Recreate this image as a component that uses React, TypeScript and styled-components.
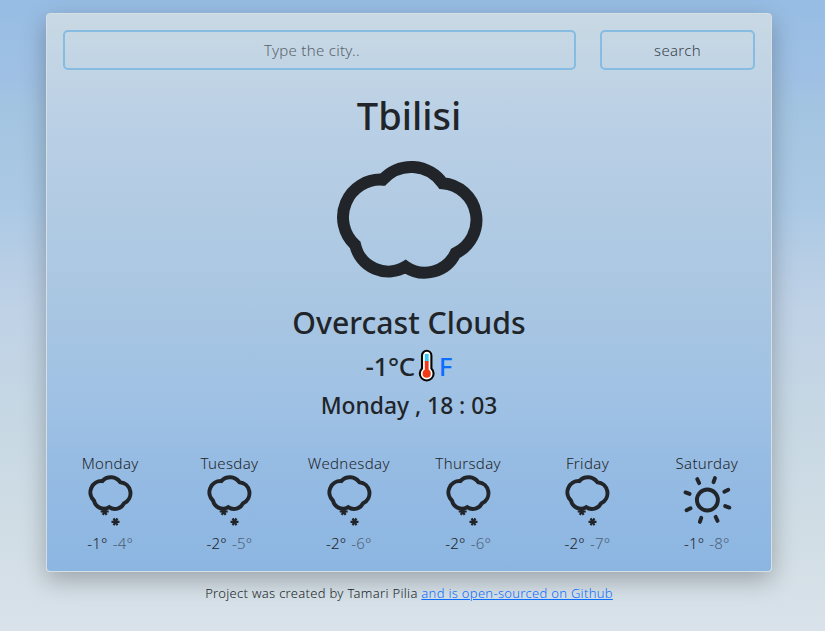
import React from "react";
import styled, { createGlobalStyle } from "styled-components";

const Global = createGlobalStyle`
  * { box-sizing: border-box; }
  html { min-height: 100%; background: linear-gradient(180deg, #97bde4 0%, #9fc0e4 12%, #a3c4e1 17%, #abc9e5 33%, #b5cde5 40%, #bfd2e6 49%, #c7d8e4 67%, #d2dee5 87%, #d9e2ea 100%); }
  body { margin: 0; color: #212529; font-family: "Noto Sans", sans-serif; font-size: 16px; line-height: 1.5; }
`;
const Page = styled.main`
  width: 726px;
  height: 631px;
  margin-left: 46px;
  padding-top: 13px;
`;
const Card = styled.section`
  height: 559px;
  padding: 16px;
  border: 1px solid #d7dfe6;
  border-radius: 4px;
  background: linear-gradient(180deg, #c9d9e4 0%, #b9cfe5 21%, #aac7e2 50%, #9fc1e4 70%, #95bbe3 82%, #8cb6e2 100%);
  box-shadow: 0 8px 24px rgba(0, 0, 0, .27);
  display: flex;
  flex-direction: column;
  align-items: center;
`;
const Search = styled.form`
  width: 100%;
  display: grid;
  grid-template-columns: 513px 155px;
  column-gap: 24px;
  height: 40px;
`;
const field = `
  height: 40px;
  min-width: 0;
  border: 2px solid #86bbe2;
  border-radius: 5px;
  background: transparent;
  font-family: inherit;
  font-weight: 300;
  font-size: 15px;
  letter-spacing: .3px;
  text-align: center;
  padding: 0 12px;
`;
const Input = styled.input`
  ${field}
  padding-right: 27px;
  &::placeholder { color: #59636b; opacity: 1; }
`;
const Button = styled.button`${field} color: #39434a;`;
const City = styled.h1`
  margin: 21px 0 0;
  height: 48px;
  font-size: 38px;
  line-height: 48px;
  font-weight: 500;
`;
const Hero = styled.div`
  display: flex;
  height: 118px;
  margin: 22px 0 23px;
`;
const Condition = styled.h2`
  margin: 0;
  font-size: 30.2px;
  line-height: 42px;
  font-weight: 500;
  white-space: nowrap;
`;
const Temperature = styled.h3`
  display: flex;
  align-items: center;
  margin: 1px 0 0;
  height: 42px;
  font-size: 26px;
  line-height: 42px;
  font-weight: 500;
`;
const Degrees = styled.span`letter-spacing: -.4px;`;
const Unit = styled.a`
  color: #0d6efd;
  text-decoration: none;
`;
const Clock = styled.h4`
  margin: 0;
  height: 38px;
  font-size: 22.8px;
  line-height: 37px;
  font-weight: 500;
  white-space: nowrap;
`;
const Forecast = styled.div`
  width: 716px;
  margin: 27px 1px 0 0;
  display: grid;
  grid-template-columns: repeat(6, 1fr);
`;
const Day = styled.div`
  display: flex;
  flex-direction: column;
  align-items: center;
  font-size: 15px;
  letter-spacing: .35px;
  font-weight: 300;
  line-height: 24px;
`;
const DayIcon = styled.div`
  height: 55px;
  margin-top: 1px;
  display: flex;
`;
const Temps = styled.div`
  display: flex;
  gap: 5px;
  letter-spacing: .2px;
`;
const Low = styled.span`opacity: .6;`;
const Footer = styled.footer`
  text-align: center;
  font-size: 13px;
  letter-spacing: .3px;
  font-weight: 300;
  line-height: 20px;
  margin-top: 11px;
  white-space: nowrap;
  a { color: #0d6efd; }
`;
const Icon = styled.svg`
  display: block;
  overflow: visible;
`;

const cloud = "M46 18.7A38.7 38.7 0 0 1 106.3 22.3A36.8 36.8 0 0 1 119.3 92.3A34.4 34.4 0 0 1 69 105.7A34.2 34.2 0 0 1 18.3 84A37.6 37.6 0 0 1 46 18.7Z";

function Cloud() {
  return (
    <Icon width="145" height="118" viewBox="0 0 146 118" preserveAspectRatio="none" fill="none" stroke="#212529" strokeWidth="12">
      <path d={cloud} />
    </Icon>
  );
}
function Snow() {
  return (
    <Icon width="50" height="55" viewBox="0 0 50 55" fill="none" stroke="#212529">
      <g transform="translate(3.6 -.5) scale(.298 .3)"><path strokeWidth="13.3" d={cloud} /></g>
      <path strokeWidth="2.2" d="M15.7 35.5h8M17.8 32.1l3.8 6.8M21.6 32.1l-3.8 6.8M26.5 45.8h8M28.6 42.4l3.8 6.8M32.4 42.4l-3.8 6.8" />
    </Icon>
  );
}
function Sun() {
  return (
    <Icon width="50" height="55" viewBox="0 0 50 55" fill="none" stroke="#212529" strokeWidth="3.9" strokeLinecap="round">
      <circle cx="25.4" cy="24" r="10.5" />
      {[0, 1, 2, 3, 4, 5, 6, 7].map(i => <path key={i} transform={`rotate(${19 + i * 45} 25.4 24)`} d="M25.4 5.2V.8" />)}
    </Icon>
  );
}
function Thermometer() {
  return (
    <Icon width="24" height="36" viewBox="0 0 24 36">
      <path d="M7 20.5V7.5a4.7 4.7 0 0 1 9.4 0v13a6.9 6.9 0 1 1-9.4 0Z" fill="white" stroke="#050505" strokeWidth="2.1" />
      <path d="M9.8 6h3.8v8H9.8z" fill="#37c7f4" />
      <path d="M9.8 13h3.8v10H9.8z" fill="#f03a17" />
      <circle cx="11.7" cy="25.7" r="4.1" fill="#f03a17" />
    </Icon>
  );
}
const days = [
  ["Monday", "-1°", "-4°"],
  ["Tuesday", "-2°", "-5°"],
  ["Wednesday", "-2°", "-6°"],
  ["Thursday", "-2°", "-6°"],
  ["Friday", "-2°", "-7°"],
  ["Saturday", "-1°", "-8°"],
];

export default function App() {
  return (
    <>
      <Global />
      <Page>
        <Card>
          <Search>
            <Input placeholder="Type the city.." />
            <Button type="button">search</Button>
          </Search>
          <City>Tbilisi</City>
          <Hero><Cloud /></Hero>
          <Condition>Overcast Clouds</Condition>
          <Temperature><Degrees>-1°C</Degrees><Thermometer /><Unit href="#">F</Unit></Temperature>
          <Clock>Monday , 18 : 03</Clock>
          <Forecast>
            {days.map(([name, high, low]) => (
              <Day key={name}>
                {name}
                <DayIcon>{name === "Saturday" ? <Sun /> : <Snow />}</DayIcon>
                <Temps><span>{high}</span><Low>{low}</Low></Temps>
              </Day>
            ))}
          </Forecast>
        </Card>
        <Footer>Project was created by Tamari Pilia <a href="#">and is open-sourced on Github</a></Footer>
      </Page>
    </>
  );
}
